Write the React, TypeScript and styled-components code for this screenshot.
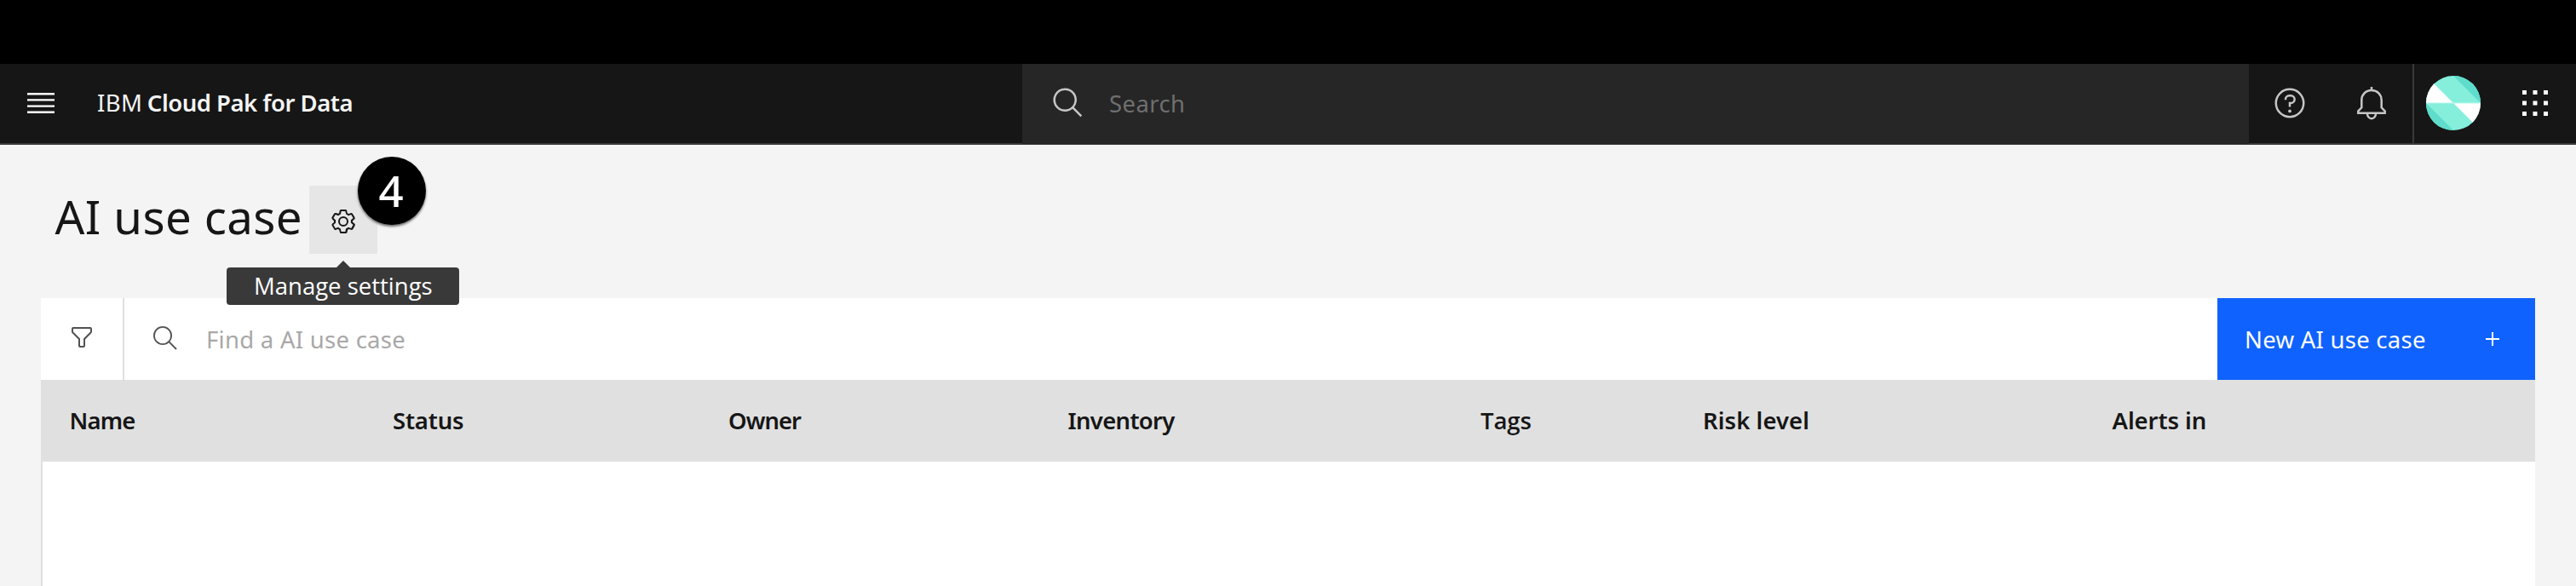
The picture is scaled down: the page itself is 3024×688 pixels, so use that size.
import React from 'react';
import styled, { createGlobalStyle } from 'styled-components';

const GlobalStyle = createGlobalStyle`
  * { box-sizing: border-box; }
  body {
    margin: 0;
    background: #f4f4f4;
    color: #161616;
    font-family: 'Noto Sans', 'Open Sans', sans-serif;
    font-size: 27.5px;
    line-height: 36px;
  }
  button { border: 0; padding: 0; background: none; font: inherit; color: inherit; }
  svg { display: block; flex: none; }
`;

const Page = styled.div`
  height: 688px;
  overflow: hidden;
  display: flex;
  flex-direction: column;
`;

const TopStrip = styled.div`
  flex: none;
  height: 75px;
  background: #000;
`;

const Header = styled.header`
  flex: none;
  height: 95px;
  display: flex;
  background: #161616;
  border-bottom: 2px solid #393939;
  color: #f4f4f4;
`;

const HeaderButton = styled.button<{ $tone?: string }>`
  width: 96px;
  height: 92px;
  display: flex;
  align-items: center;
  justify-content: center;
  color: ${(p) => p.$tone ?? '#c6c6c6'};
`;

const Brand = styled.div`
  width: 1104px;
  height: 92px;
  padding-left: 18px;
  display: flex;
  align-items: center;
  gap: 5.5px;
  white-space: nowrap;
`;

const BrandPrefix = styled.span`
  letter-spacing: 0.4px;
`;

const BrandName = styled.strong`
  font-weight: 600;
  letter-spacing: -0.5px;
`;

const GlobalSearch = styled.div`
  width: 1440px;
  height: 94px;
  padding: 0 0 2px 34px;
  display: flex;
  align-items: center;
  gap: 28px;
  background: #262626;
  color: #c6c6c6;
`;

const GlobalSearchHint = styled.span`
  color: #6f6f6f;
  letter-spacing: 0.39px;
  padding-top: 1px;
`;

const AvatarButton = styled(HeaderButton)`
  height: 93px;
  padding: 0 2px 1px 0;
  border-left: 2px solid #393939;
`;

const TitleRow = styled.div`
  flex: none;
  height: 180px;
  padding: 48px 0 0 64.5px;
  display: flex;
  align-items: flex-start;
`;

const Title = styled.h1`
  margin: 0;
  width: 298.5px;
  font-size: 54.6px;
  line-height: 72px;
  font-weight: 400;
  letter-spacing: 0.39px;
  white-space: nowrap;
`;

const SettingsButton = styled.button`
  position: relative;
  width: 80px;
  height: 80px;
  padding-top: 4px;
  display: flex;
  align-items: center;
  justify-content: center;
  background: #e6e6e6;
`;

const StepBadge = styled.span`
  position: absolute;
  left: 57px;
  top: -34px;
  width: 80px;
  height: 80px;
  border-radius: 50%;
  background: #000;
  color: #fff;
  box-shadow: 0 2px 3px rgba(0, 0, 0, 0.6);
  font-size: 51px;
  line-height: 79px;
  font-weight: 500;
  text-align: center;
  text-indent: -2px;
`;

const Tooltip = styled.span`
  position: absolute;
  left: -97px;
  top: 96px;
  width: 273px;
  height: 44px;
  padding-left: 32px;
  border-radius: 4px;
  background: #393939;
  color: #fff;
  font-family: 'Open Sans', sans-serif;
  line-height: 43px;
  text-align: left;
  white-space: nowrap;
  z-index: 1;

  &::before {
    content: '';
    position: absolute;
    left: 129px;
    top: -8px;
    border: solid transparent;
    border-width: 0 8px 8px;
    border-bottom-color: #393939;
  }
`;

const Panel = styled.main`
  flex: 1;
  margin: 0 48px;
  display: flex;
  flex-direction: column;
`;

const Toolbar = styled.div`
  flex: none;
  height: 96px;
  display: flex;
  background: #fff;
`;

const FilterButton = styled.button`
  width: 98px;
  padding: 0 0 4px;
  display: flex;
  align-items: center;
  justify-content: center;
  border-right: 2px solid #e0e0e0;
  color: #525252;
`;

const TableSearch = styled.div`
  flex: 1;
  padding: 2px 0 0 32px;
  display: flex;
  align-items: center;
  gap: 32px;
  color: #a8a8a8;
  letter-spacing: 0.27px;
`;

const CreateButton = styled.button`
  width: 373px;
  padding: 0 26px 0 32px;
  display: flex;
  align-items: center;
  justify-content: space-between;
  background: #0f62fe;
  color: #fff;
  letter-spacing: 0.26px;
`;

const CreateLabel = styled.span`
  padding-top: 2px;
`;

const HeadRow = styled.div`
  flex: none;
  height: 96px;
  padding: 0 0 0 33.4px;
  display: grid;
  grid-template-columns: 379.6px 394px 398.5px 484.5px 261px 480.5px 1fr;
  align-items: center;
  background: #e0e0e0;
`;

const HeadCell = styled.div<{ $track: number; $doubleG?: boolean }>`
  font-weight: 600;
  letter-spacing: ${(p) => p.$track}px;
  ${(p) => p.$doubleG && "font-family: 'Open Sans', sans-serif;"}
  white-space: nowrap;
`;

const TableBody = styled.div`
  flex: 1;
  background: #fff;
  border-left: 2px solid #e0e0e0;
`;

const SearchIconSlot = styled.span`
  height: 36px;
  color: #525252;
`;

const MenuIcon = () => (
  <svg width="40" height="40" viewBox="0 0 20 20" fill="currentColor">
    <path d="M2 14.8h16V16H2zM2 11.2h16v1.2H2zM2 7.6h16v1.2H2zM2 4h16v1.2H2z" />
  </svg>
);

const SearchIcon = () => (
  <svg width="40" height="40" viewBox="0 0 32 32" fill="currentColor">
    <path d="M29 27.586l-7.552-7.552a11.018 11.018 0 1 0-1.414 1.414L27.586 29zM4 13a9 9 0 1 1 9 9 9.01 9.01 0 0 1-9-9z" />
  </svg>
);

const SmallSearchIcon = () => (
  <svg width="32" height="32" viewBox="0 0 32 32" fill="none" stroke="currentColor" strokeWidth="1.8">
    <circle cx="13" cy="13" r="10.1" />
    <path d="M20.2 20.2 29 29" />
  </svg>
);

const HelpIcon = () => (
  <svg width="40" height="40" viewBox="0 0 32 32" fill="currentColor">
    <path d="M16 2a14 14 0 1 0 14 14A14 14 0 0 0 16 2zm0 26a12 12 0 1 1 12-12 12 12 0 0 1-12 12z" />
    <circle cx="16" cy="23.5" r="1.5" />
    <path d="M17 8h-1.5a4.49 4.49 0 0 0-4.5 4.5v.5h2v-.5a2.5 2.5 0 0 1 2.5-2.5H17a2.5 2.5 0 0 1 0 5h-2v4.5h2V17a4.5 4.5 0 0 0 0-9z" />
  </svg>
);

const BellIcon = () => (
  <svg width="40" height="40" viewBox="0 0 40 40" fill="none" stroke="currentColor" strokeWidth="2.5">
    <path d="M20 1v4" />
    <path d="M20 5C13.2 5 8.3 10 8.3 16.5v8.8l-4 4.2v2.2h31.4v-2.2l-4-4.2v-8.8C31.7 10 26.8 5 20 5z" />
    <path d="M15 32.5a5 5.7 0 0 0 10 0" />
  </svg>
);

const AppsIcon = () => (
  <svg width="40" height="40" viewBox="0 0 40 40" fill="currentColor">
    {[5, 17.5, 30].map((y) =>
      [5, 17.5, 30].map((x) => <rect key={`${x}-${y}`} x={x} y={y} width="5" height="5" />),
    )}
  </svg>
);

const Avatar = () => (
  <svg width="64" height="64" viewBox="0 0 64 64">
    <clipPath id="avatar-circle">
      <circle cx="32" cy="32" r="32" />
    </clipPath>
    <g clipPath="url(#avatar-circle)">
      <rect width="64" height="64" fill="#85efdc" />
      <path d="M32 0h32v32z" fill="#5fdccb" />
      <path d="M0 32v32h32z" fill="#5fdccb" />
      <path d="M0 0l32 32H0z" fill="#fff" />
      <path d="M32 32h32v32z" fill="#fff" />
      <path d="M0 32h64" stroke="#b5f6ea" strokeWidth="1" />
    </g>
  </svg>
);

const GearIcon = () => (
  <svg width="32" height="32" viewBox="0 0 16 16" fill="currentColor">
    <path d="M13.5,8.4c0-0.1,0-0.3,0-0.4c0-0.1,0-0.3,0-0.4l1-0.8c0.4-0.3,0.4-0.9,0.2-1.3l-1.2-2C13.3,3.2,13,3,12.6,3c-0.1,0-0.2,0-0.3,0.1l-1.2,0.4c-0.2-0.1-0.4-0.3-0.7-0.4l-0.3-1.3C10.1,1.3,9.7,1,9.2,1H6.8c-0.5,0-0.9,0.3-1,0.8L5.6,3.1C5.3,3.2,5.1,3.3,4.9,3.4L3.7,3C3.6,3,3.5,3,3.4,3C3,3,2.7,3.2,2.5,3.5l-1.2,2C1.1,5.9,1.2,6.4,1.6,6.8l0.9,0.9c0,0.1,0,0.3,0,0.4c0,0.1,0,0.3,0,0.4L1.6,9.2c-0.4,0.3-0.5,0.9-0.2,1.3l1.2,2C2.7,12.8,3,13,3.4,13c0.1,0,0.2,0,0.3-0.1l1.2-0.4c0.2,0.1,0.4,0.3,0.7,0.4l0.3,1.3c0.1,0.5,0.5,0.8,1,0.8h2.4c0.5,0,0.9-0.3,1-0.8l0.3-1.3c0.2-0.1,0.4-0.2,0.7-0.4l1.2,0.4c0.1,0,0.2,0.1,0.3,0.1c0.4,0,0.7-0.2,0.9-0.5l1.1-2c0.2-0.4,0.2-0.9-0.2-1.3L13.5,8.4z M12.6,12l-1.7-0.6c-0.4,0.3-0.9,0.6-1.4,0.8L9.2,14H6.8l-0.4-1.8c-0.5-0.2-0.9-0.5-1.4-0.8L3.4,12l-1.2-2l1.4-1.2c-0.1-0.5-0.1-1.1,0-1.6L2.2,6l1.2-2l1.7,0.6C5.5,4.2,6,4,6.5,3.8L6.8,2h2.4l0.4,1.8c0.5,0.2,0.9,0.5,1.4,0.8L12.6,4l1.2,2l-1.4,1.2c0.1,0.5,0.1,1.1,0,1.6l1.4,1.2L12.6,12z" />
    <circle cx="8" cy="8" r="2.5" fill="none" stroke="currentColor" />
  </svg>
);

const FilterIcon = () => (
  <svg width="32" height="32" viewBox="0 0 32 32" fill="currentColor">
    <path d="M18,28H14a2,2,0,0,1-2-2V18.41L4.59,11A2,2,0,0,1,4,9.59V6A2,2,0,0,1,6,4H26a2,2,0,0,1,2,2V9.59A2,2,0,0,1,27.41,11L20,18.41V26A2,2,0,0,1,18,28ZM6,6V9.59l8,8V26h4V17.59l8-8V6Z" />
  </svg>
);

const PlusIcon = () => (
  <svg width="48" height="32" viewBox="-8 0 48 32" fill="currentColor">
    <path d="M17 15V8h-2v7H8v2h7v7h2v-7h7v-2z" />
  </svg>
);

const columns = [
  { label: 'Name', track: -0.8 },
  { label: 'Status', track: -0.2 },
  { label: 'Owner', track: -1 },
  { label: 'Inventory', track: -0.7 },
  { label: 'Tags', track: -0.1, doubleG: true },
  { label: 'Risk level', track: 0.05 },
  { label: 'Alerts in', track: -0.08 },
];

export default function App() {
  return (
    <Page>
      <GlobalStyle />
      <TopStrip />
      <Header>
        <HeaderButton $tone="#fff" aria-label="Menu">
          <MenuIcon />
        </HeaderButton>
        <Brand>
          <BrandPrefix>IBM</BrandPrefix>
          <BrandName>Cloud Pak for Data</BrandName>
        </Brand>
        <GlobalSearch>
          <SearchIcon />
          <GlobalSearchHint>Search</GlobalSearchHint>
        </GlobalSearch>
        <HeaderButton aria-label="Help">
          <HelpIcon />
        </HeaderButton>
        <HeaderButton aria-label="Notifications">
          <BellIcon />
        </HeaderButton>
        <AvatarButton aria-label="Profile">
          <Avatar />
        </AvatarButton>
        <HeaderButton $tone="#fff" aria-label="Switcher">
          <AppsIcon />
        </HeaderButton>
      </Header>
      <TitleRow>
        <Title>AI use case</Title>
        <SettingsButton aria-label="Manage settings">
          <GearIcon />
          <StepBadge>4</StepBadge>
          <Tooltip>Manage settings</Tooltip>
        </SettingsButton>
      </TitleRow>
      <Panel>
        <Toolbar>
          <FilterButton aria-label="Filter">
            <FilterIcon />
          </FilterButton>
          <TableSearch>
            <SearchIconSlot>
              <SmallSearchIcon />
            </SearchIconSlot>
            Find a AI use case
          </TableSearch>
          <CreateButton>
            <CreateLabel>New AI use case</CreateLabel>
            <PlusIcon />
          </CreateButton>
        </Toolbar>
        <HeadRow>
          {columns.map((c) => (
            <HeadCell key={c.label} $track={c.track} $doubleG={c.doubleG}>
              {c.label}
            </HeadCell>
          ))}
        </HeadRow>
        <TableBody />
      </Panel>
    </Page>
  );
}
